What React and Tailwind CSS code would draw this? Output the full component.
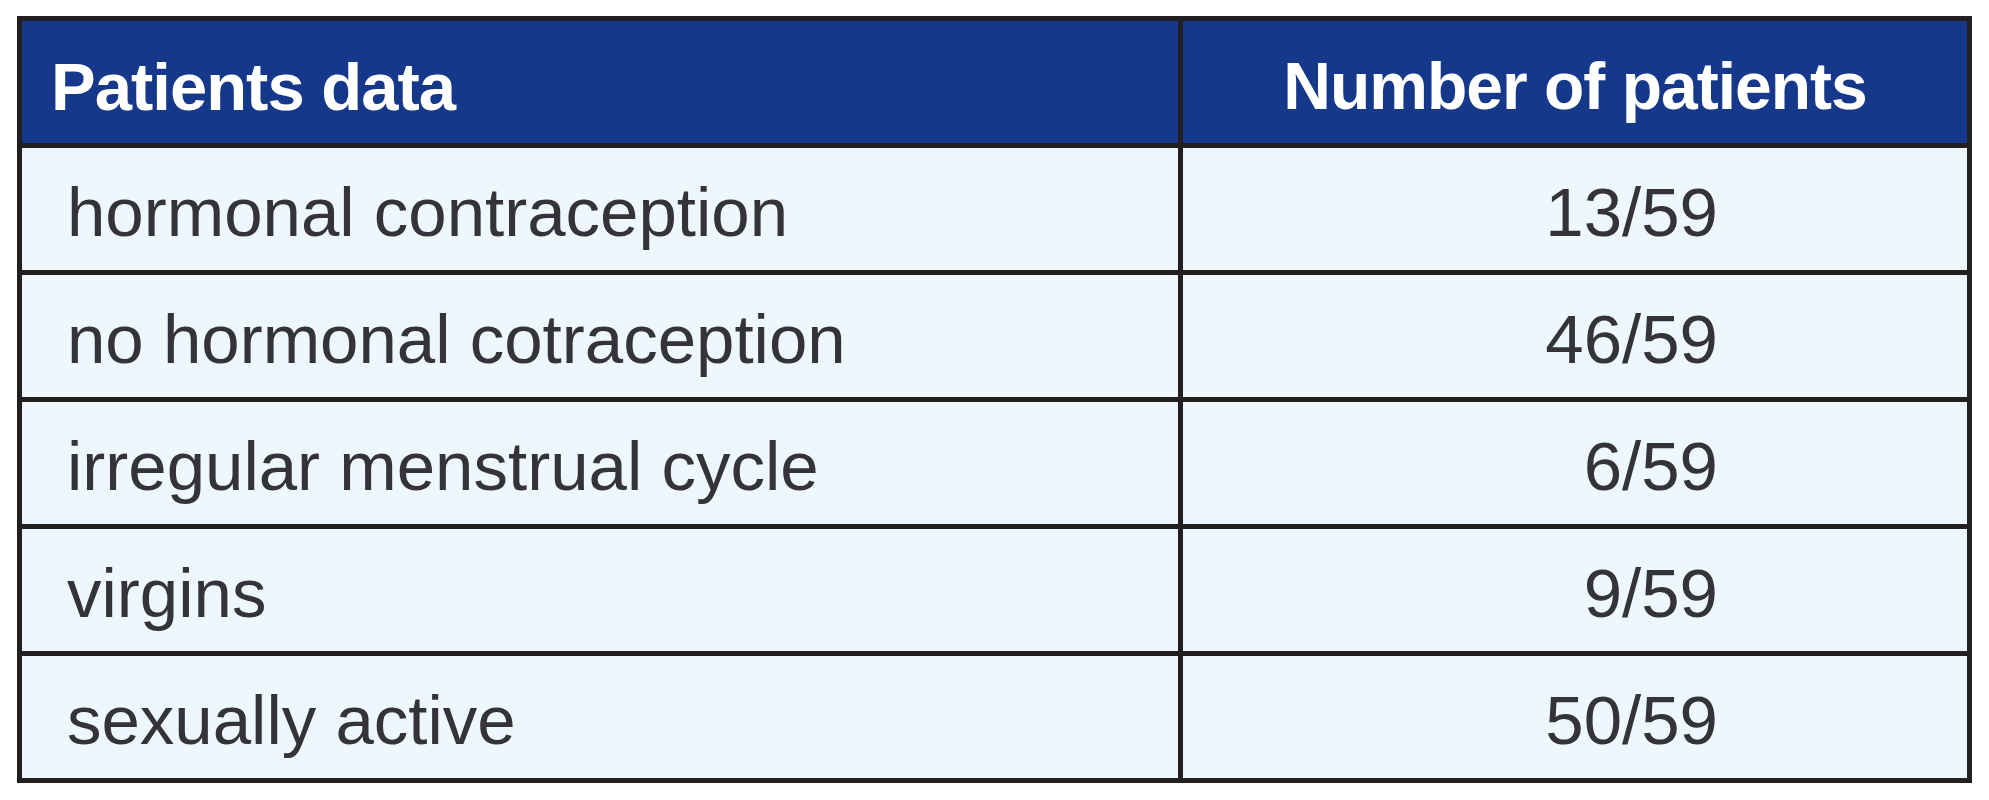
import React from "react";

const rows = [
  ["hormonal contraception", "13/59"],
  ["no hormonal cotraception", "46/59"],
  ["irregular menstrual cycle", "6/59"],
  ["virgins", "9/59"],
  ["sexually active", "50/59"],
];

export default function App() {
  return (
    <div className="w-[1989px] h-[800px] bg-white pt-[16px] pl-[17px]" style={{ fontFamily: '"Liberation Sans", Arial, sans-serif' }}>
      <div className="w-[1955px] border-[5px] border-[#231f20] bg-[#231f20] flex flex-col gap-[5px]">
        <div className="flex gap-[5px] h-[122px]">
          <div className="w-[1156px] bg-[#15388a] flex items-center pl-[29px] pt-[8px]">
            <span className="text-white font-bold text-[67px] leading-none tracking-[-1px]">Patients data</span>
          </div>
          <div className="flex-1 bg-[#15388a] flex items-center justify-center pt-[8px]">
            <span className="text-white font-bold text-[66px] leading-none tracking-[-1px]">Number of patients</span>
          </div>
        </div>
        {rows.map(([label, value]) => (
          <div key={label} className="flex gap-[5px] h-[122px]">
            <div className="w-[1156px] bg-[#eef7fe] flex items-center pl-[45px] pt-[6px]">
              <span className="text-[#333338] text-[69px] leading-none">{label}</span>
            </div>
            <div className="flex-1 bg-[#eef7fe] flex items-center justify-end pr-[249px] pt-[6px]">
              <span className="text-[#333338] text-[69px] leading-none">{value}</span>
            </div>
          </div>
        ))}
      </div>
    </div>
  );
}
